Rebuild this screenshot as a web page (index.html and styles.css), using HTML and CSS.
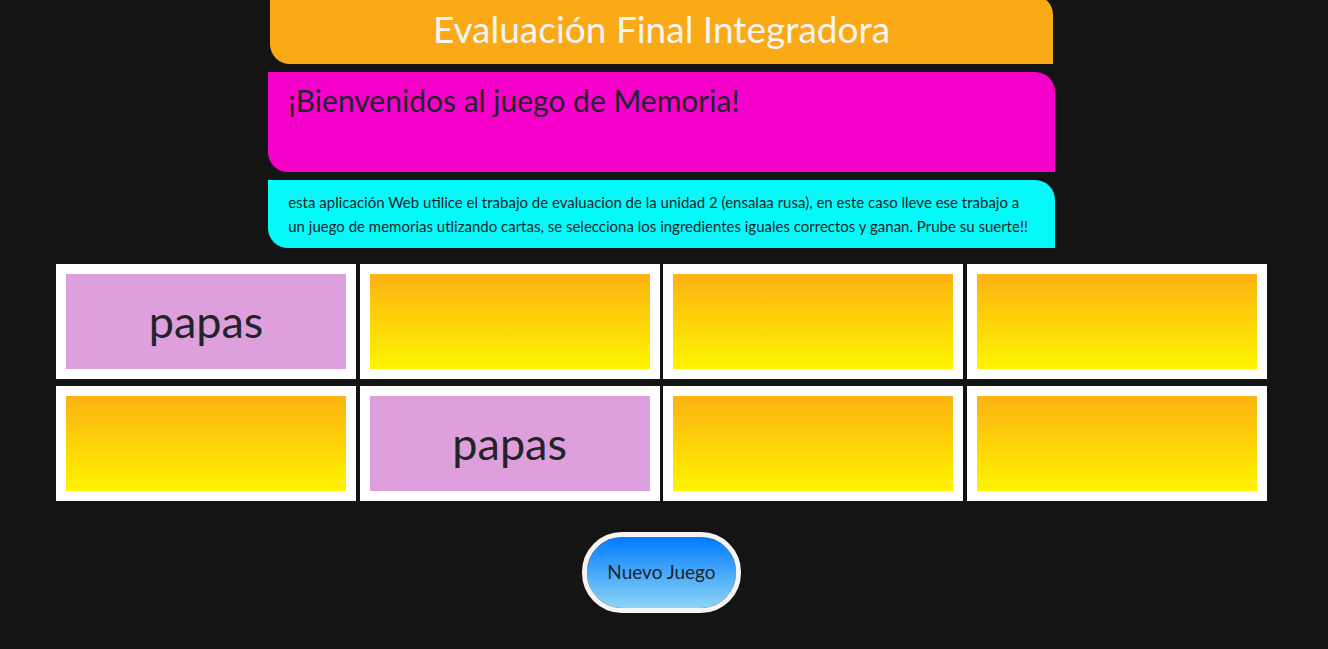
FILE: index.html
```html
<!DOCTYPE html>
<html lang="es">
<head>
<meta charset="utf-8">
<meta name="viewport" content="width=device-width, initial-scale=1">
<title>Evaluación Final Integradora</title>
<link rel="stylesheet" href="styles.css">
</head>
<body>
<div class="page">
  <header class="top">
    <h1 class="title">Evaluación Final Integradora</h1>
  </header>
  <main class="content">
    <section class="panel welcome">
      <h2 class="greeting">¡Bienvenidos al juego de Memoria!</h2>
    </section>
    <section class="panel about">
      <p class="description">esta aplicación Web utilice el trabajo de evaluacion de la unidad 2 (ensalaa rusa), en este caso lleve ese trabajo a<br>un juego de memorias utlizando cartas, se selecciona los ingredientes iguales correctos y ganan. Prube su suerte!!</p>
    </section>
    <div class="board">
      <button type="button" class="card open">papas</button>
      <button type="button" class="card" aria-label="Carta oculta"></button>
      <button type="button" class="card" aria-label="Carta oculta"></button>
      <button type="button" class="card" aria-label="Carta oculta"></button>
      <button type="button" class="card" aria-label="Carta oculta"></button>
      <button type="button" class="card open">papas</button>
      <button type="button" class="card" aria-label="Carta oculta"></button>
      <button type="button" class="card" aria-label="Carta oculta"></button>
    </div>
    <button type="button" class="new-game">Nuevo Juego</button>
  </main>
</div>
</body>
</html>
```
FILE: styles.css
```css
* {
  box-sizing: border-box;
}

body {
  margin: 0;
  background: #141414;
  color: #212529;
  font-family: Lato, "Open Sans", sans-serif;
}

button {
  color: inherit;
  font-family: inherit;
  cursor: pointer;
}

.page {
  padding: 0 11px 0 6px;
}

/* The banner is tucked slightly under the top edge of the window. */
.top {
  margin-top: -5px;
  padding: 0 3px;
}

.title {
  width: 60%;
  margin: 0 auto;
  padding: 10px 20px 11px;
  border-radius: 0 20px 0 20px;
  background: #faaa16;
  color: #f8f4f4;
  font-size: 37px;
  font-weight: 400;
  line-height: 48px;
  text-align: center;
}

.content {
  display: flex;
  flex-direction: column;
  align-items: center;
  gap: 8px;
  padding-top: 8px;
}

.panel {
  width: 60%;
  padding: 10px 20px;
  border-radius: 0 20px 0 20px;
}

.welcome {
  min-height: 100px;
  background: #f600cb;
}

.greeting {
  margin: 0;
  font-size: 30px;
  font-weight: 400;
  line-height: 36px;
}

.about {
  background: #06f9f9;
}

.description {
  margin: 0;
  font-size: 15px;
  line-height: 24px;
}

.board {
  display: grid;
  grid-template-columns: repeat(4, minmax(0, 300px));
  grid-auto-rows: 115px;
  justify-content: space-between;
  row-gap: 7px;
  width: 100%;
  padding: 8px 50px 0;
}

.card {
  padding: 0 0 2px;
  border: 10px solid #fff;
  background: linear-gradient(#fdb213, #fff400) padding-box;
  font-size: 45px;
  line-height: 48px;
}

.open {
  background: #dda0dd;
}

.new-game {
  min-height: 81px;
  margin-top: 23px;
  padding: 0 20px 1px;
  border: 5px solid #f8f4f4;
  border-radius: 40px;
  background: linear-gradient(#007bff, #8dd5f5) padding-box;
  font-size: 19px;
  line-height: 24px;
}
```
